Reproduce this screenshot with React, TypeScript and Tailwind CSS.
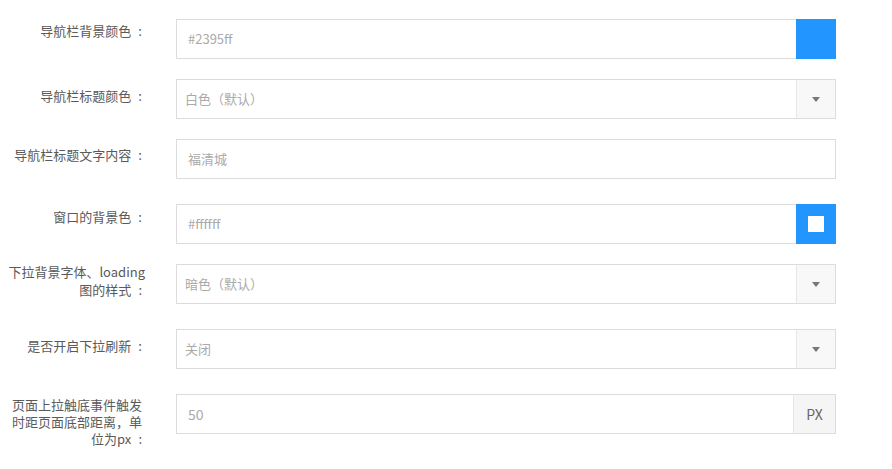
import React from "react";

const font = { fontFamily: '"Noto Sans CJK SC", "Noto Sans", sans-serif' };

function Arrow() {
  return (
    <div className="w-[39px] h-full bg-[#f8f8f8] border-l border-[#e6e6e6] flex items-center justify-center">
      <svg width="8" height="5" viewBox="0 0 8 5">
        <path d="M0 0 L8 0 L4 5 Z" fill="#777" />
      </svg>
    </div>
  );
}

const C = "\u2007:";

export default function App() {
  const base = "w-[146px] text-right text-[13px] text-[#5a5a5a]";
  const label = `${base} pr-[4px]`;
  return (
    <div className="w-[892px] h-[469px] bg-white pt-[19px] overflow-hidden" style={font}>
      {/* row 1 */}
      <div className="flex items-start">
        <div className={`${label} leading-[18px] pt-[3px]`}>{"导航栏背景颜色" + C}</div>
        <div className="ml-[30px] w-[660px] h-[40px] flex">
          <div className="flex-1 border border-[#dcdcdc] border-r-0 flex items-center pl-[11px] text-[13px] text-[#aaa]">#2395ff</div>
          <div className="w-[40px] h-full bg-[#2395ff]" />
        </div>
      </div>
      {/* row 2 */}
      <div className="flex items-start mt-[20px]">
        <div className={`${label} leading-[18px] pt-[8px]`}>{"导航栏标题颜色" + C}</div>
        <div className="ml-[30px] w-[660px] h-[40px] flex border border-[#dcdcdc]">
          <div className="flex-1 flex items-center pl-[8px] text-[13px] text-[#aaa]">白色（默认）</div>
          <Arrow />
        </div>
      </div>
      {/* row 3 */}
      <div className="flex items-start mt-[20px]">
        <div className={`${label} leading-[18px] pt-[7px]`}>{"导航栏标题文字内容" + C}</div>
        <div className="ml-[30px] w-[660px] h-[40px] flex border border-[#dcdcdc] items-center pl-[11px] text-[13px] text-[#aaa]">福清城</div>
      </div>
      {/* row 4 */}
      <div className="flex items-start mt-[25px]">
        <div className={`${label} leading-[18px] pt-[4px]`}>{"窗口的背景色" + C}</div>
        <div className="ml-[30px] w-[660px] h-[40px] flex">
          <div className="flex-1 border border-[#dcdcdc] border-r-0 flex items-center pl-[11px] text-[13px] text-[#aaa]">#ffffff</div>
          <div className="w-[40px] h-full bg-[#2395ff] flex items-center justify-center">
            <div className="w-[16px] h-[16px] bg-white" />
          </div>
        </div>
      </div>
      {/* row 5 */}
      <div className="flex items-start mt-[20px] h-[40px]">
        <div className={`${base} pr-[1px] leading-[18px] -mt-[1px]`}>{"下拉背景字体、loading 图的样式" + C + "\u00a0"}</div>
        <div className="ml-[30px] w-[660px] h-[40px] flex border border-[#dcdcdc]">
          <div className="flex-1 flex items-center pl-[8px] text-[13px] text-[#aaa]">暗色（默认）</div>
          <Arrow />
        </div>
      </div>
      {/* row 6 */}
      <div className="flex items-start mt-[25px]">
        <div className={`${label} leading-[18px] pt-[8px]`}>{"是否开启下拉刷新" + C}</div>
        <div className="ml-[30px] w-[660px] h-[40px] flex border border-[#dcdcdc]">
          <div className="flex-1 flex items-center pl-[8px] text-[13px] text-[#aaa]">关闭</div>
          <Arrow />
        </div>
      </div>
      {/* row 7 */}
      <div className="flex items-start mt-[25px]">
        <div className={`${label} leading-[17px] pt-[2px] pl-[10px]`}>{"页面上拉触底事件触发时距页面底部距离，单位为px" + C}</div>
        <div className="ml-[30px] w-[660px] h-[40px] flex border border-[#dcdcdc]">
          <div className="flex-1 flex items-center pl-[11px] text-[14px] text-[#aaa]">50</div>
          <div className="w-[42px] h-full bg-[#f5f5f5] border-l border-[#e6e6e6] flex items-center justify-center text-[14px] text-[#666]">PX</div>
        </div>
      </div>
    </div>
  );
}
